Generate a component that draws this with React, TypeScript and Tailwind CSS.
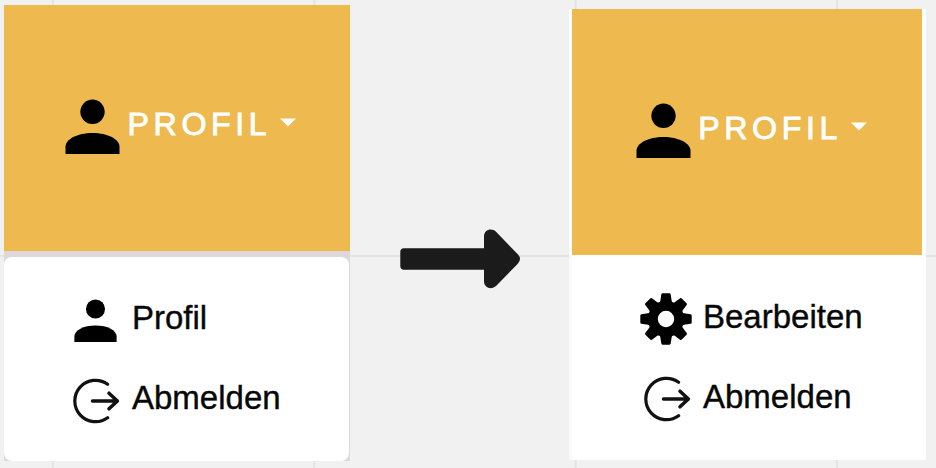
import React from "react";

function Person({ className }: { className: string }) {
  return (
    <svg viewBox="0 0 55 55" className={className} fill="#000">
      <circle cx="27.5" cy="12.8" r="12.2" />
      <path d="M.5 55V47.8C.5 40.3 12 34 27.5 34S54.5 40.3 54.5 47.8V55Z" />
    </svg>
  );
}

function Logout() {
  return (
    <svg
      viewBox="0 0 48 46"
      className="h-[46px] w-12 shrink-0"
      fill="none"
      stroke="#111"
      strokeWidth="3.2"
      strokeLinecap="round"
      strokeLinejoin="round"
    >
      <path d="M35.6 6.2A20.7 20.7 0 1 0 35.6 39.8" />
      <path d="M20.5 23H45M37 15.2L45.4 23L37 30.8" strokeWidth="3.5" />
    </svg>
  );
}

const teeth = [0, 45, 90, 135, 180, 225, 270, 315];

function Gear() {
  return (
    <svg viewBox="-26 -26 52 52" className="size-[52px] shrink-0" fill="#000">
      <circle r="13.1" fill="none" stroke="#000" strokeWidth="9.8" />
      {teeth.map((angle) => (
        <path
          key={angle}
          transform={`rotate(${angle})`}
          d="M-6.6 -15.5L-5.7 -18L-4.7 -24.6Q-4.5 -25.7 -3.4 -25.7H3.4Q4.5 -25.7 4.7 -24.6L5.7 -18L6.6 -15.5Z"
        />
      ))}
    </svg>
  );
}

function Header({ iconClass }: { iconClass: string }) {
  return (
    <div className="flex h-[246px] items-start bg-[#eeb94e]">
      <Person className={`mt-[94px] size-[55px] shrink-0 ${iconClass}`} />
      <span className="mt-[103px] ml-[7.5px] w-[141.5px] text-[32.2px] leading-none tracking-[4.6px] whitespace-nowrap text-white [-webkit-text-stroke:0.9px_white]">
        PROFIL
      </span>
      <svg viewBox="0 0 16 9" className="mt-[113px] ml-[11px] h-[9px] w-4 shrink-0" fill="#fff">
        <path d="M0 .5H16L8 8.5Z" />
      </svg>
    </div>
  );
}

function Label({ children }: { children: string }) {
  return (
    <span className="block text-[33px] leading-none whitespace-nowrap text-[#080808] [-webkit-text-stroke:0.4px_#080808]">
      {children}
    </span>
  );
}

export default function App() {
  return (
    <main className="h-[468px] w-[936px] overflow-hidden bg-[#f1f1f1] bg-[linear-gradient(90deg,transparent_51.5px,#e4e4e4_51.5px,#e4e4e4_53.5px,transparent_53.5px),linear-gradient(180deg,transparent_255.5px,#e4e4e4_255.5px,#e4e4e4_257.5px,transparent_257.5px)] bg-[size:261.4px_468px] font-['Liberation_Sans',Arial,sans-serif]">
      <div className="flex items-start pl-1">
        <section className="mt-[5px] h-[456px] w-[346px] shrink-0 bg-[#dfd8d8]">
          <Header iconClass="ml-[61px]" />
          <div className="mt-[6px] mr-px h-[204px] rounded-[8px] bg-white pt-[42px]">
            <div className="flex h-[44px] items-start">
              <Person className="ml-[70px] size-[43px] shrink-0" />
              <div className="mt-[2px] ml-[15px]"><Label>Profil</Label></div>
            </div>
            <div className="mt-[35px] flex items-start">
              <div className="ml-[68px]"><Logout /></div>
              <div className="mt-[3px] ml-[12px]"><Label>Abmelden</Label></div>
            </div>
          </div>
        </section>

        <svg viewBox="0 0 120 60" className="mt-[229px] ml-[50px] h-[60px] w-[120px] shrink-0" fill="#1b1b1b">
          <path d="M4 19.3H84V7.5C84 .8 91.5-1.7 96.3 3L117.8 25.3Q122.2 30 117.8 34.7L96.3 56.8C91.5 61.5 84 59 84 52.3V40.7H4Q.3 40.7 .3 37V23Q.3 19.3 4 19.3Z" />
        </svg>

        <section className="mt-[9px] ml-[49px] h-[451px] w-[357px] shrink-0 bg-white">
          <div className="pr-1 pl-[3px]"><Header iconClass="ml-[63.7px]" /></div>
          <div className="h-[205px] border-l-[3px] border-[#fafafa] pt-[38px]">
            <div className="flex items-start">
              <div className="ml-[68px]"><Gear /></div>
              <div className="mt-[7px] ml-[11px]"><Label>Bearbeiten</Label></div>
            </div>
            <div className="mt-[31px] flex items-start">
              <div className="ml-[71px]"><Logout /></div>
              <div className="mt-[4px] ml-[12px]"><Label>Abmelden</Label></div>
            </div>
          </div>
        </section>
      </div>
    </main>
  );
}
